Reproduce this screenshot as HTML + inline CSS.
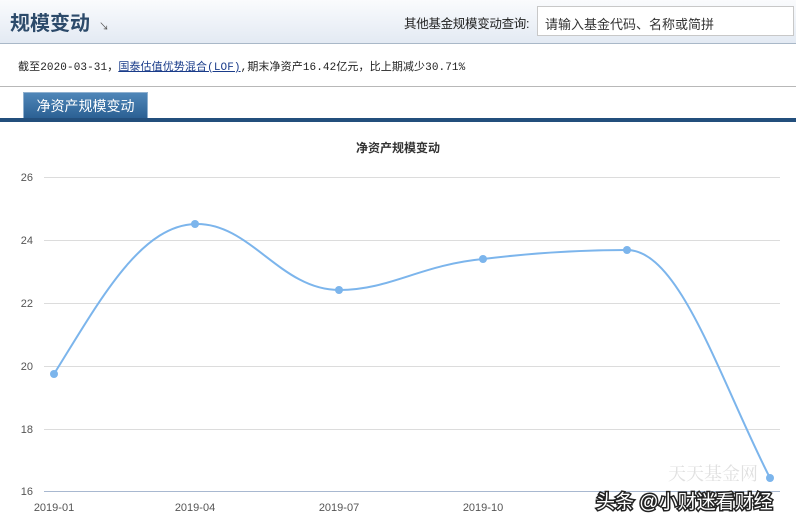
<!DOCTYPE html><html><head><meta charset="utf-8"><style>
body{margin:0;width:796px;height:527px;overflow:hidden;background:#fff;font-family:"Liberation Sans","Noto Sans CJK SC",sans-serif;position:relative}
.hd{position:absolute;left:0;top:0;width:796px;height:43px;background:linear-gradient(#fafbfd,#e3eaf3);border-bottom:1px solid #a9b8c8}
.t{position:absolute;left:10px;top:7px;font-size:20px;font-weight:bold;color:#2c4a6a}
.ar{position:absolute;left:99px;top:18px;font-size:10px;color:#555}
.q{position:absolute;left:404px;top:13px;font-size:12.5px;color:#222;letter-spacing:-0.3px}
.in{position:absolute;left:537px;top:6px;width:257px;height:30px;border:1px solid #c8c8c8;background:#fff;box-sizing:border-box;font-size:13px;color:#333;padding:7px 0 0 7px}
.info{position:absolute;left:18px;top:58px;font-size:11px;color:#222;font-family:"Liberation Mono","Noto Sans CJK SC",monospace;letter-spacing:0.1px}
.info a{color:#1a3c8a;text-decoration:underline}
.l2{position:absolute;left:0;top:86px;width:796px;border-top:1px solid #b8b8b8}
.tab{position:absolute;left:23px;top:92px;width:125px;height:27px;background:linear-gradient(#4f86b8,#2a5f92);color:#fff;font-size:14px;text-align:center;line-height:27px;border:1px solid #8fb0cf;border-bottom:none;box-sizing:border-box}
.bar{position:absolute;left:0;top:118px;width:796px;height:4px;background:#234f7c}
</style></head><body>
<div class="hd"><div class="t">规模变动</div><div class="ar">↘</div><div class="q">其他基金规模变动查询:</div><div class="in">请输入基金代码、名称或简拼</div></div>
<div class="info">截至2020-03-31，<a>国泰估值优势混合(LOF)</a>,期末净资产16.42亿元，比上期减少30.71%</div>
<div class="l2"></div>
<div class="tab">净资产规模变动</div><div class="bar"></div>
<svg style="position:absolute;left:0;top:0" width="796" height="527">
<text x="398" y="152" font-size="12" font-weight="bold" fill="#333" text-anchor="middle" font-family="Liberation Sans,Noto Sans CJK SC,sans-serif">净资产规模变动</text>
<g stroke="#dcdcdc" stroke-width="1">
<line x1="44" x2="780" y1="177.5" y2="177.5"/><line x1="44" x2="780" y1="240.5" y2="240.5"/><line x1="44" x2="780" y1="303.5" y2="303.5"/><line x1="44" x2="780" y1="366.5" y2="366.5"/><line x1="44" x2="780" y1="429.5" y2="429.5"/></g>
<line x1="44" x2="780" y1="491.5" y2="491.5" stroke="#a8b8d0"/>
<g font-size="11" fill="#555" font-family="Liberation Sans,sans-serif" text-anchor="end">
<text x="33" y="181">26</text><text x="33" y="244">24</text><text x="33" y="307">22</text><text x="33" y="370">20</text><text x="33" y="433">18</text><text x="33" y="495">16</text></g>
<g font-size="11" fill="#555" font-family="Liberation Sans,sans-serif" text-anchor="middle">
<text x="54" y="511">2019-01</text><text x="195" y="511">2019-04</text><text x="339" y="511">2019-07</text><text x="483" y="511">2019-10</text></g>
<path d="M54,374 C100,300 140,226 195,224 C250,222 280,290 339,290 C390,290 420,265 483,259 C540,252 590,250 627,250 C680,250 720,380 770,478" fill="none" stroke="#7cb5ec" stroke-width="2"/>
<g fill="#7cb5ec"><circle cx="54" cy="374" r="4"/><circle cx="195" cy="224" r="4"/><circle cx="339" cy="290" r="4"/><circle cx="483" cy="259" r="4"/><circle cx="627" cy="250" r="4"/><circle cx="770" cy="478" r="4"/></g>
<text x="668" y="480" font-size="18" fill="#e0e0e0" font-family="Liberation Serif,Noto Serif CJK SC,serif">天天基金网</text>
<text x="596" y="508" font-size="19" fill="#fff" stroke="#222" stroke-width="3" paint-order="stroke" font-family="Liberation Sans,Noto Sans CJK SC,sans-serif">头条 @小财迷看财经</text>
</svg>
</body></html>
